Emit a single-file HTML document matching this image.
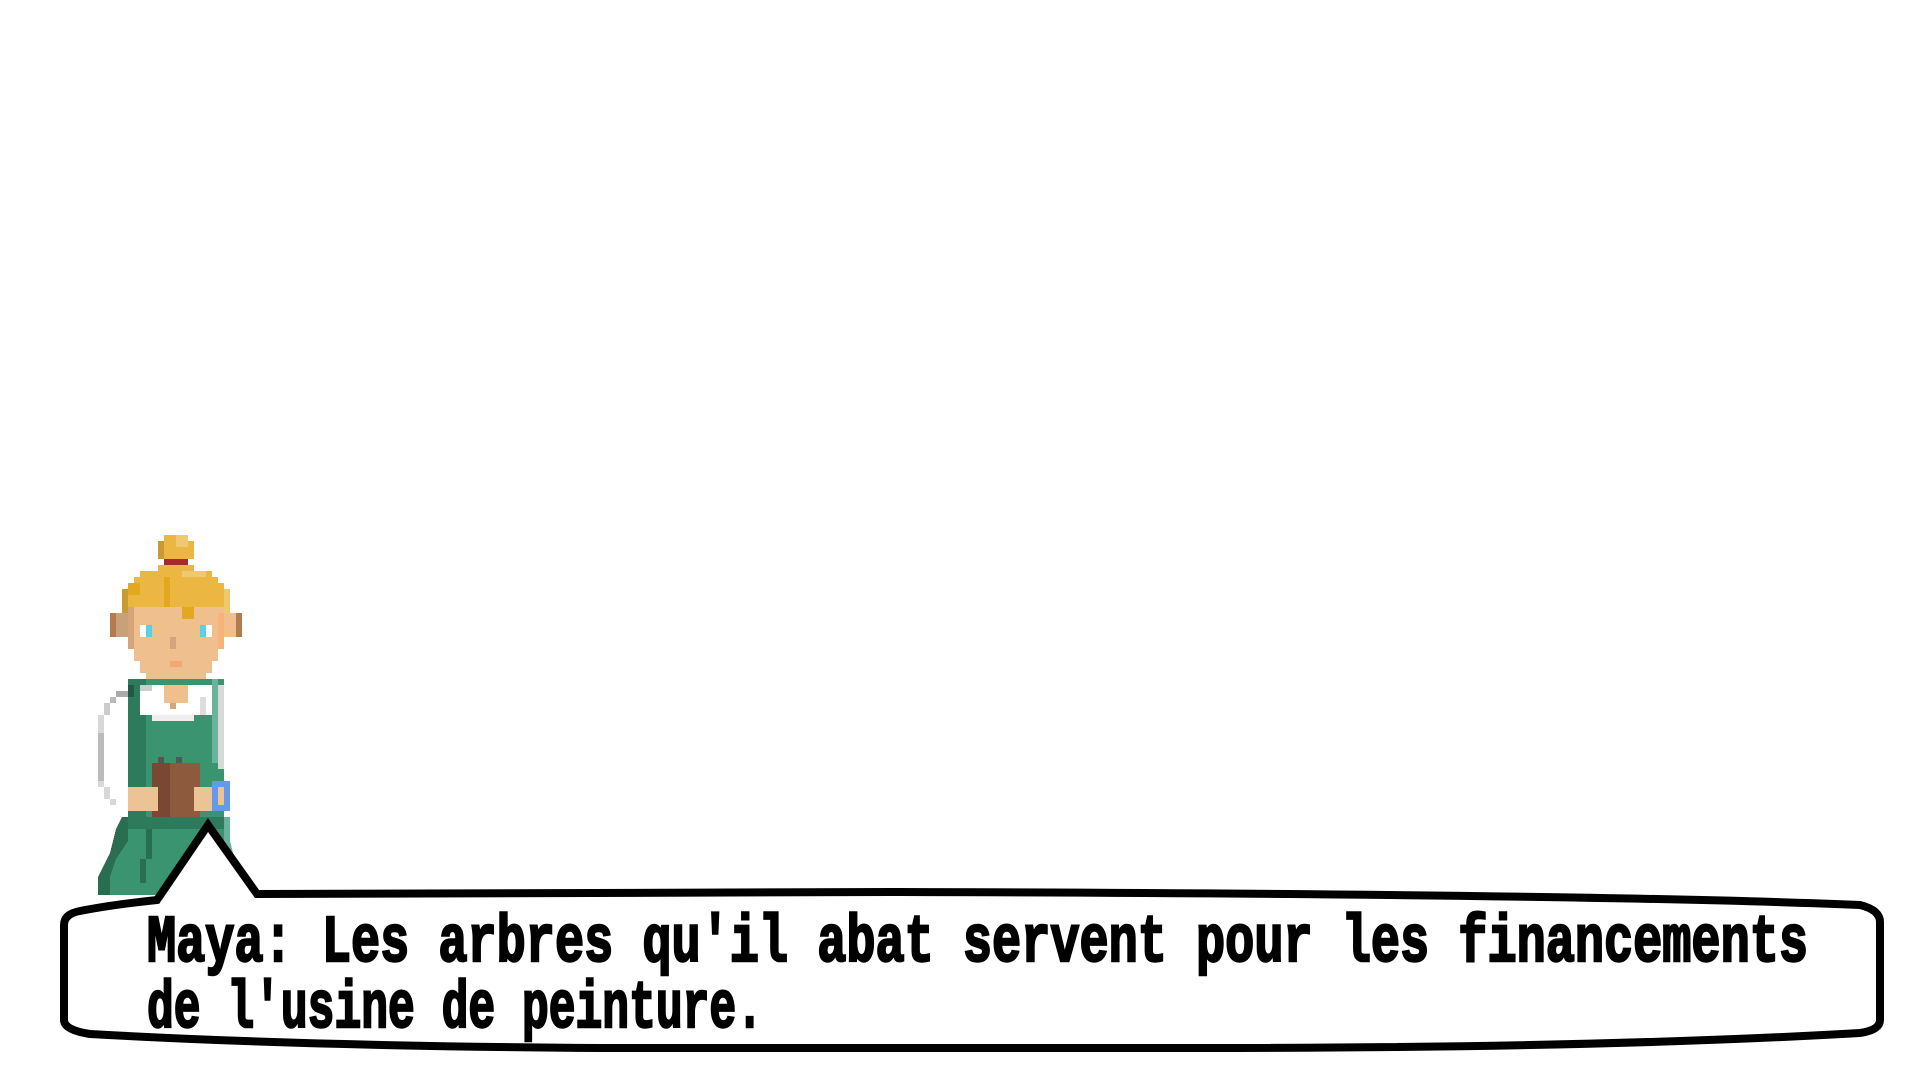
<!DOCTYPE html>
<html><head><meta charset="utf-8"><style>
html,body{margin:0;padding:0;background:#fff;width:1920px;height:1080px;overflow:hidden}
svg{position:absolute;left:0;top:0}
</style></head><body>
<svg width="1920" height="1080" viewBox="0 0 1920 1080" shape-rendering="crispEdges">
<g transform="translate(92,529) scale(6)">
<!-- bun -->
<rect x="12" y="1" width="4" height="1" fill="#ecb642"/>
<rect x="11" y="2" width="6" height="3" fill="#ecb642"/>
<rect x="11" y="2" width="1" height="3" fill="#c99a32"/>
<rect x="14" y="1" width="2" height="2" fill="#f0c870"/>
<rect x="12" y="5" width="4" height="1" fill="#a52a2a"/>
<!-- hair -->
<rect x="11" y="6" width="6" height="1" fill="#ecb642"/>
<rect x="8" y="7" width="12" height="1" fill="#ecb642"/>
<rect x="7" y="8" width="14" height="1" fill="#ecb642"/>
<rect x="6" y="9" width="16" height="1" fill="#ecb642"/>
<rect x="5" y="10" width="18" height="3" fill="#ecb642"/>
<rect x="5" y="10" width="1" height="4" fill="#c99a32"/>
<rect x="22" y="10" width="1" height="4" fill="#f0c870"/>
<rect x="15" y="7" width="4" height="1" fill="#f0c870"/>
<rect x="12" y="8" width="1" height="5" fill="#e2a820"/>
<rect x="6" y="9" width="2" height="2" fill="#e2a820"/>
<!-- ears -->
<rect x="3" y="14" width="3" height="4" fill="#c8a07a"/>
<rect x="3" y="14" width="1" height="4" fill="#b07c50"/>
<rect x="22" y="14" width="3" height="4" fill="#f0bf8e"/>
<rect x="24" y="14" width="1" height="4" fill="#b07c50"/>
<!-- face -->
<rect x="6" y="13" width="16" height="7" fill="#f0bf8e"/>
<rect x="6" y="13" width="1" height="7" fill="#d4a47a"/>
<rect x="21" y="14" width="1" height="6" fill="#f8b478"/>
<rect x="7" y="20" width="14" height="2" fill="#f0bf8e"/>
<rect x="8" y="22" width="12" height="2" fill="#f0bf8e"/>
<rect x="9" y="24" width="10" height="1" fill="#f0bf8e"/>
<rect x="11" y="25" width="7" height="1" fill="#a0674a"/>
<rect x="15" y="13" width="2" height="2" fill="#e2a820"/>
<rect x="8" y="16" width="1" height="2" fill="#fff"/>
<rect x="9" y="16" width="1" height="2" fill="#5ccfe6"/>
<rect x="18" y="16" width="1" height="2" fill="#5ccfe6"/>
<rect x="19" y="16" width="1" height="2" fill="#fff"/>
<rect x="13" y="18" width="1" height="2" fill="#d4a47a"/>
<rect x="13" y="22" width="2" height="1" fill="#f4a878"/>
<!-- left sleeve outline -->
<rect x="4" y="27" width="2" height="1" fill="#aaa"/>
<rect x="3" y="28" width="1" height="1" fill="#bbb"/>
<rect x="2" y="29" width="1" height="2" fill="#ccc"/>
<rect x="1" y="31" width="1" height="3" fill="#d8d8d8"/>
<rect x="1" y="34" width="1" height="8" fill="#bbb"/>
<rect x="1" y="42" width="1" height="1" fill="#d8d8d8"/>
<rect x="2" y="43" width="1" height="2" fill="#d8d8d8"/>
<rect x="3" y="45" width="1" height="1" fill="#d8d8d8"/>
<rect x="20" y="30" width="1" height="10" fill="#d8d8d8"/>
<!-- dress -->
<rect x="6" y="25" width="16" height="23" fill="#3a9470"/>
<rect x="6" y="25" width="3" height="23" fill="#2e7a5c"/>
<rect x="6" y="26" width="1" height="2" fill="#1f5a44"/>
<rect x="20" y="25" width="1" height="14" fill="#6ab39a"/>
<rect x="21" y="26" width="1" height="14" fill="#d8d8d8"/>
<!-- collar -->
<rect x="8" y="26" width="12" height="5" fill="#fff"/>
<rect x="8" y="26" width="2" height="1" fill="#ccc"/>
<rect x="18" y="28" width="1" height="3" fill="#ddd"/>
<rect x="10" y="31" width="7" height="1" fill="#eee"/>
<rect x="12" y="26" width="4" height="3" fill="#f0bf8e"/>
<rect x="13" y="29" width="1" height="1" fill="#d4a47a"/>
<!-- book -->
<rect x="10" y="39" width="8" height="9" fill="#8d5a3e"/>
<rect x="10" y="39" width="3" height="9" fill="#7a4832"/>
<rect x="11" y="38" width="1" height="1" fill="#555"/>
<rect x="14" y="38" width="1" height="1" fill="#555"/>
<!-- hands -->
<rect x="6" y="43" width="5" height="4" fill="#ecc394"/>
<rect x="17" y="43" width="5" height="4" fill="#ecc394"/>
<rect x="20" y="42" width="3" height="5" fill="#6699ee"/>
<rect x="21" y="43" width="1" height="3" fill="#ecc394"/>
<!-- skirt -->
<polygon points="5,48 22,48 23,52 24,56 25,58 26,61 2,61 1,58 3,54 4,50" fill="#3a9470"/>
<polygon points="5,48 6,48 6,52 4,55 3,58 3,61 1,61 1,58 3,54 4,50" fill="#2a6e52"/>
<polygon points="22,48 23,48 23,52 24,56 25,58 26,61 24,61 23,56 22,52" fill="#6ab39a"/>
<rect x="9" y="50" width="1" height="5" fill="#2a6e52"/>
<rect x="8" y="55" width="1" height="4" fill="#2a6e52"/>
<rect x="6" y="48" width="16" height="2" fill="#2e7a5c"/>
</g>
<path d="M64,1020 L64,925 Q64,914 80,911 Q110,905 157,900 L208,825 L257,894 Q600,892 900,892 Q1600,894 1860,905 Q1880,910 1880,922 L1880,1020 Q1880,1030 1860,1033 Q1600,1048 1200,1048 L600,1048 Q300,1046 90,1034 Q64,1030 64,1020 Z" fill="#fff" stroke="#000" stroke-width="8" stroke-linejoin="miter" shape-rendering="auto"/>
<g font-family="'Liberation Mono', monospace" font-weight="bold" font-size="44.6" fill="#000" stroke="#000" stroke-width="1.6">
<text x="147" y="961" textLength="1661" lengthAdjust="spacingAndGlyphs" transform="translate(0,961) scale(1,1.5) translate(0,-961)">Maya: Les arbres qu'il abat servent pour les financements</text>
<text x="147" y="1027" textLength="616" lengthAdjust="spacingAndGlyphs" transform="translate(0,1027) scale(1,1.5) translate(0,-1027)">de l'usine de peinture.</text>
</g>
</svg>
</body></html>
